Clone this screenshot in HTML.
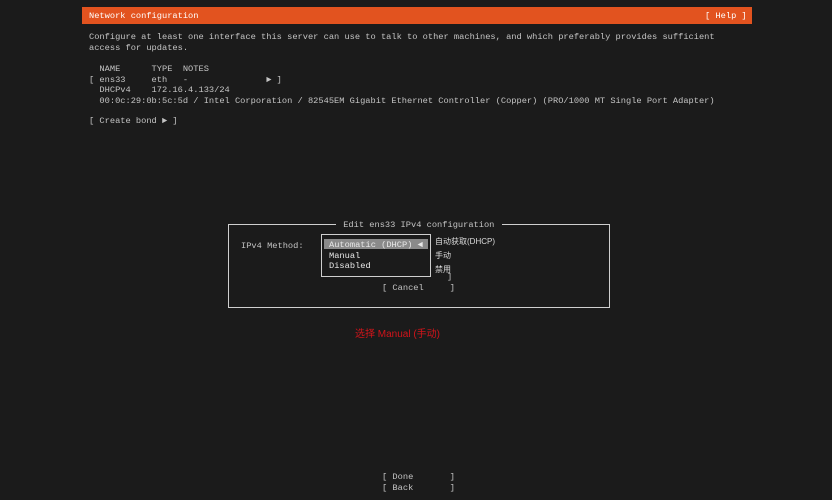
<!DOCTYPE html>
<html><head><meta charset="utf-8"><style>
body{margin:0;width:832px;height:500px;background:#1b1b1b;overflow:hidden;position:relative;font-family:"Liberation Mono",monospace;font-size:8.7px;color:#c4c4c4}
.l{position:absolute;white-space:pre;line-height:10.5px}
.bar{position:absolute;left:82px;top:7px;width:670px;height:17px;background:#e2531f}
.box{position:absolute;left:228px;top:224px;width:380px;height:82px;border:1px solid #cfcfcf}
.cn{font-family:"Liberation Sans","Noto Sans CJK SC",sans-serif;font-size:8px}
</style></head><body>
<div class="bar"></div>
<div class="l" style="left:89px;top:11px;color:#fff">Network configuration</div>
<div class="l" style="left:705px;top:11px;color:#fff">[ Help ]</div>
<div class="l" style="left:89px;top:32px">Configure at least one interface this server can use to talk to other machines, and which preferably provides sufficient
access for updates.</div>
<div class="l" style="left:89px;top:64px">  NAME      TYPE  NOTES
[ ens33     eth   -               ► ]
  DHCPv4    172.16.4.133/24
  00:0c:29:0b:5c:5d / Intel Corporation / 82545EM Gigabit Ethernet Controller (Copper) (PRO/1000 MT Single Port Adapter)</div>
<div class="l" style="left:89px;top:116px">[ Create bond ► ]</div>
<div class="box"></div>
<div class="l" style="left:336px;top:220px;background:#1b1b1b;padding:0 2px"> Edit ens33 IPv4 configuration </div>
<div class="l" style="left:241px;top:241px">IPv4 Method:</div>
<div style="position:absolute;left:321px;top:234px;width:108px;height:41px;border:1px solid #cfcfcf"></div>
<div style="position:absolute;left:324px;top:239px;width:104px;height:10px;background:#8a8a8a"></div>
<div class="l" style="left:329px;top:240px;color:#e8e8e8">Automatic (DHCP) ◄
Manual
Disabled</div>
<div class="l cn" style="left:435px;top:237px;color:#ddd">自动获取(DHCP)</div>
<div class="l cn" style="left:435px;top:251px;color:#ddd">手动</div>
<div class="l cn" style="left:435px;top:265px;color:#ddd">禁用</div>
<div class="l" style="left:447px;top:272px">]</div>
<div class="l" style="left:382px;top:283px">[ Cancel     ]</div>
<div class="l cn" style="left:355px;top:330px;color:#d2141a;font-size:10px">选择 Manual (手动)</div>
<div class="l" style="left:382px;top:472px">[ Done       ]
[ Back       ]</div>
</body></html>
